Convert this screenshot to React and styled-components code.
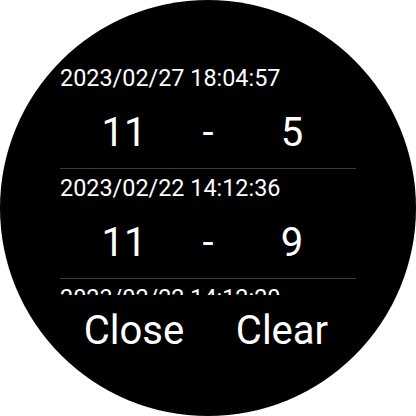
import React from 'react';
import styled, { createGlobalStyle } from 'styled-components';

const GlobalStyle = createGlobalStyle`
  html, body {
    margin: 0;
    padding: 0;
    background: #ffffff;
  }
  body {
    font-family: Roboto, "Noto Sans", sans-serif;
  }
`;

const Screen = styled.div`
  width: 416px;
  height: 416px;
  border-radius: 50%;
  background: #000000;
  color: #ffffff;
  overflow: hidden;
  display: flex;
  flex-direction: column;
  align-items: center;
  box-sizing: border-box;
  padding-top: 65px;
`;

const List = styled.div`
  width: 296px;
  height: 230px;
  overflow: hidden;
  display: flex;
  flex-direction: column;
`;

const Item = styled.div`
  display: flex;
  flex-direction: column;
  margin-top: ${(p) => (p.$first ? '0' : '6px')};
`;

const Stamp = styled.div`
  font-size: 23.4px;
  line-height: 27px;
  white-space: nowrap;
`;

const Score = styled.div`
  margin-top: 17px;
  display: grid;
  grid-template-columns: repeat(3, 84px);
  justify-content: center;
  font-size: 40px;
  line-height: 47px;
  text-align: center;
`;

const Divider = styled.div`
  margin-top: 12px;
  height: 1px;
  background: #3a3a3a;
`;

const Buttons = styled.div`
  margin-top: 12px;
  width: 296px;
  display: grid;
  grid-template-columns: 1fr 1fr;
`;

const Button = styled.button`
  background: none;
  border: none;
  padding: 0;
  color: #ffffff;
  font-family: Roboto, "Noto Sans", sans-serif;
  font-size: 40px;
  line-height: 47px;
  text-align: center;
`;

const history = [
  { time: '2023/02/27 18:04:57', left: 11, right: 5 },
  { time: '2023/02/22 14:12:36', left: 11, right: 9 },
  { time: '2023/02/22 14:12:20', left: 11, right: 7 },
];

export default function App() {
  return (
    <>
      <GlobalStyle />
      <Screen>
        <List>
          {history.map((h, i) => (
            <Item key={h.time} $first={i === 0}>
              <Stamp>{h.time}</Stamp>
              <Score>
                <span>{h.left}</span>
                <span>-</span>
                <span>{h.right}</span>
              </Score>
              <Divider />
            </Item>
          ))}
        </List>
        <Buttons>
          <Button>Close</Button>
          <Button>Clear</Button>
        </Buttons>
      </Screen>
    </>
  );
}
